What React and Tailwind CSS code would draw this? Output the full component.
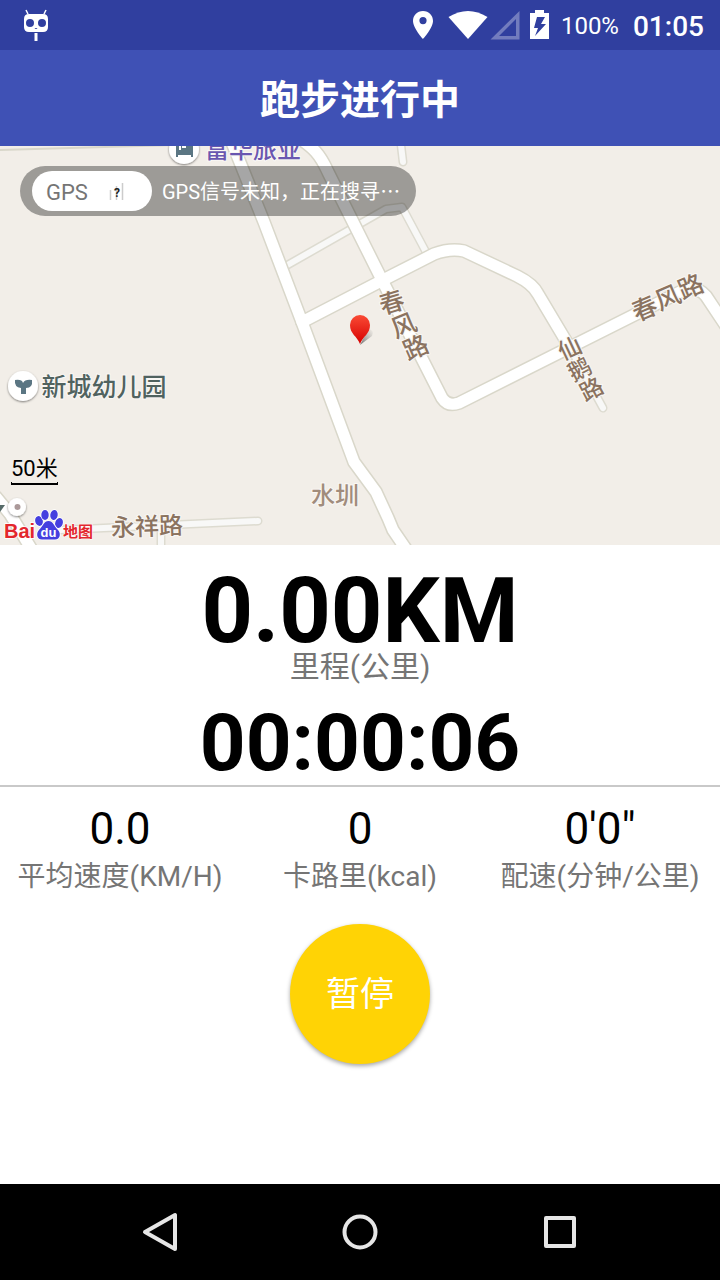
import React from "react";

const mainRoads = [
  "M229 135L264 222L302 322L354 462L376 492L388 518L393 530L408 552",
  "M296 136C314 148 320 154 328 172L383 282L442 398Q448 407 459 403L680 292Q696 284 706 296L726 326",
  "M302 322L383 280L434 254Q450 248 464 251L517 276Q533 284 538 294L569 346",
  "M-4 497L10 514L32 550",
];
const smallRoads = [
  "M284 267L386 209L402 207L426 252",
  "M398 120L403 162",
  "M569 346L603 408",
  "M60 530L258 521",
  "M161 528L161 550",
];

function RoadName({ children, x, y, angle, size = 25, fill = "#8b7360" }) {
  return (
    <text
      x={x}
      y={y}
      fontSize={size}
      fill={fill}
      stroke="#f9f7f4"
      strokeWidth="2"
      paintOrder="stroke"
      textAnchor="middle"
      dominantBaseline="central"
      transform={angle ? `rotate(${angle} ${x} ${y})` : undefined}
      className="font-medium"
    >
      {children}
    </text>
  );
}

function MapDrawing() {
  return (
    <svg
      viewBox="0 146 720 399"
      preserveAspectRatio="xMidYMid slice"
      className="block h-full w-full"
      role="img"
      aria-label="地图"
    >
      <defs>
        <linearGradient id="pin" x1="0" y1="0" x2="0" y2="1">
          <stop offset="0" stopColor="#fa4b35" />
          <stop offset="1" stopColor="#d60000" />
        </linearGradient>
        <linearGradient id="shade" x1="0" y1="1" x2="1" y2="0">
          <stop offset="0" stopColor="#444" stopOpacity=".75" />
          <stop offset="1" stopColor="#777" stopOpacity="0" />
        </linearGradient>
        <filter id="drop" x="-30%" y="-30%" width="160%" height="160%">
          <feDropShadow dx="0" dy="1" stdDeviation="1" floodOpacity=".5" />
        </filter>
      </defs>
      <rect y="146" width="720" height="399" fill="#f2eee8" />
      <path d="M0 150L175 145" stroke="#d9d7ca" strokeWidth="2" />
      <g fill="none" strokeLinejoin="round" strokeLinecap="round">
        {smallRoads.map((d) => <path key={d} d={d} stroke="#dddbd0" strokeWidth="9" />)}
        {smallRoads.map((d) => <path key={d} d={d} stroke="#f8f8f7" strokeWidth="6" />)}
        {mainRoads.map((d) => <path key={d} d={d} stroke="#d9d7ca" strokeWidth="14" />)}
        {mainRoads.map((d) => <path key={d} d={d} stroke="#fff" strokeWidth="11" />)}
      </g>

      <RoadName x={392} y={303} angle={-17}>春</RoadName>
      <RoadName x={404} y={326} angle={-22}>风</RoadName>
      <RoadName x={416} y={348} angle={-24}>路</RoadName>
      <RoadName x={645} y={309} angle={-23}>春</RoadName>
      <RoadName x={668} y={298} angle={-23}>风</RoadName>
      <RoadName x={691} y={287} angle={-23}>路</RoadName>
      <RoadName x={570} y={349} angle={-25} size={23}>仙</RoadName>
      <RoadName x={580} y={370} angle={-28} size={23}>鹅</RoadName>
      <RoadName x={592} y={390} angle={-28} size={23}>路</RoadName>
      <RoadName x={147} y={527} angle={-2} size={24}>永祥路</RoadName>
      <RoadName x={335} y={496} size={24} fill="#a18c7c">水圳</RoadName>
      <RoadName x={253} y={150} size={24} fill="#6a57b0">富华旅业</RoadName>
      <RoadName x={104} y={387} size={25} fill="#50625f">新城幼儿园</RoadName>

      <circle cx="184" cy="149" r="15" fill="#fff" filter="url(#drop)" />
      <path fillRule="evenodd" d="M176 141H179V150H181V141H190Q193 142 193 147V157H191V155H178V157H176ZM182 146V148H186V146Z" fill="#5b7683" />
      <circle cx="23" cy="386" r="15" fill="#fff" filter="url(#drop)" />
      <path d="M15 380Q22 379 23 383Q25 379 32 380Q33 388 26 388V394H21V388Q14 387 15 380Z" fill="#5b7683" />
      <path d="M0 505H5L0 512Z" fill="#566b69" />
      <circle cx="17" cy="507" r="9" fill="#fff" filter="url(#drop)" />
      <circle cx="17.500" cy="507" r="3" fill="#ab9999" />

      <path d="M360 345L368 329Q375 330 372 336Z" fill="url(#shade)" />
      <path d="M360 344C357 336 350 334 350 325A10 10 0 0 1 370 325C370 334 363 336 360 344Z" fill="url(#pin)" />

      <g stroke="#fff" strokeWidth="1.500" paintOrder="stroke">
        <text x="4" y="538" fontSize="20" className="font-['Liberation_Sans',sans-serif] font-bold" fill="#e3272d">Bai</text>
        <g fill="#453fdf">
          <ellipse cx="39" cy="521" rx="3.800" ry="5" transform="rotate(-15 39 521)" />
          <ellipse cx="45" cy="515" rx="3.700" ry="5" />
          <ellipse cx="54" cy="515" rx="3.700" ry="5" transform="rotate(10 54 515)" />
          <ellipse cx="59" cy="523" rx="3.800" ry="5" transform="rotate(20 59 523)" />
          <path d="M48.500 521C53 521 54 526 58 530C61 533 60.500 539.500 55 539.500H42C36.500 539.500 36 533 39 530C43 526 44 521 48.500 521Z" />
        </g>
      </g>
      <text x="48.500" y="537" fontSize="13" textAnchor="middle" fill="#fff" className="font-['Liberation_Sans',sans-serif] font-bold">du</text>
      <text x="63" y="537" fontSize="15" fill="#e3272d" stroke="#fff" strokeWidth="1" paintOrder="stroke" className="font-bold">地图</text>
    </svg>
  );
}

function StatusBar() {
  return (
    <div className="flex h-[50px] items-center bg-[#303f9f] px-4 text-white">
      <svg width="40" height="50" viewBox="16 0 40 50" aria-hidden="true">
        <path d="M26 10L28 14M46 10L44 14" stroke="#fff" strokeWidth="1.500" />
        <path fillRule="evenodd" fill="#fff" d="M29 14H43Q48 14 48 19V27Q48 32 43 32H29Q24 32 24 27V19Q24 14 29 14ZM30 19A4 4 0 1 0 30 27A4 4 0 1 0 30 19ZM42 19A4 4 0 1 0 42 27A4 4 0 1 0 42 19ZM34.500 28Q36 30 37.500 28Z" />
        <path d="M34.500 33H37.500V41H34.500Z" fill="#fff" />
      </svg>
      <svg className="ml-auto" width="140" height="50" viewBox="412 0 140 50" fill="#fff" aria-hidden="true">
        <path fillRule="evenodd" d="M424 11C418 11 414 15.500 414 21C414 28 424 39 424 39S434 28 434 21C434 15.500 430 11 424 11ZM424 17A3.600 3.600 0 1 1 424 24.200A3.600 3.600 0 1 1 424 17Z" />
        <path d="M449.500 17Q469 5 488.500 17L469 39Z" />
        <path fillRule="evenodd" d="M491.500 39.500L520.500 11V39.500ZM500 36H517V19Z" opacity=".32" />
        <path fillRule="evenodd" d="M531 13H536V10H545V13H550V39H531ZM538 17L535 28H539L536 36L547 24H542L546 17Z" />
      </svg>
      <span className="ml-2.5 pt-0.5 text-2xl">100%</span>
      <span className="ml-3.5 pt-1 text-[28px] font-medium">01:05</span>
    </div>
  );
}

function Stat({ value, label }) {
  return (
    <div className="flex flex-col items-center gap-2">
      <dd className="order-1 text-[44px] leading-[48px] text-black">{value}</dd>
      <dt className="order-2 text-[28px] leading-8 whitespace-nowrap text-[#757575]">{label}</dt>
    </div>
  );
}

function NavButton({ label, children }) {
  return (
    <button type="button" aria-label={label} className="flex h-full items-center justify-center">
      <svg width="40" height="40" viewBox="0 0 40 40" fill="none" stroke="#e6e6e6" strokeWidth="4" strokeLinejoin="round">
        {children}
      </svg>
    </button>
  );
}

export default function App() {
  return (
    <div className="flex min-h-screen flex-col bg-white font-['Roboto','Noto_Sans_CJK_SC',sans-serif]" lang="zh-CN">
      <StatusBar />
      <header className="flex h-24 items-center justify-center bg-[#3f51b5] pt-1.5">
        <h1 className="text-[40px] font-bold text-white">跑步进行中</h1>
      </header>

      <section className="relative h-[399px] overflow-hidden">
        <MapDrawing />
        <div className="absolute top-5 left-5 flex h-[50px] items-center rounded-full bg-[#000]/35 pr-4 pl-3 text-white">
          <div className="flex h-10 w-[120px] items-center gap-5 rounded-full bg-white pt-0.5 pl-3.5 text-[#757575]">
            <span className="text-[22px]">GPS</span>
            <svg width="18" height="20" viewBox="0 0 18 20" aria-hidden="true">
              <path d="M2.500 8V18M8.500 4V18M14.500 1V18" stroke="#ccc" strokeWidth="1.500" />
              <text x="9" y="15" fontSize="12" textAnchor="middle" fill="#222" className="font-bold">?</text>
            </svg>
          </div>
          <span className="ml-2.5 text-xl leading-6 whitespace-nowrap">
            GPS信号未知，正在搜寻<span className="font-['Noto_Sans_CJK_SC',sans-serif]">…</span>
          </span>
        </div>
        <div className="absolute bottom-[60px] left-[11px] text-[22px] leading-[22px] text-black">
          <span className="block">50米</span>
          <div className="mt-0.5 h-[3px] border-x border-b-2 border-black" />
        </div>
      </section>

      <main className="flex flex-col items-center pt-[22px]">
        <p className="text-[90px] leading-[90px] font-bold text-black">0.00KM</p>
        <p className="text-[30px] leading-5 text-[#757575]">里程(公里)</p>
        <p className="mt-[26px] text-[80px] leading-[80px] font-bold text-black">00:00:06</p>
        <dl className="mt-0.5 grid w-full grid-cols-3 border-t-2 border-[#c9c9c9] pt-[18px]">
          <Stat value="0.0" label="平均速度(KM/H)" />
          <Stat value="0" label="卡路里(kcal)" />
          <Stat value={"0'0\""} label="配速(分钟/公里)" />
        </dl>
        <button type="button" className="mt-[31px] size-[140px] rounded-full bg-[#ffd305] text-[34px] text-white shadow-[0_2px_4px_rgba(0,0,0,0.35)]">
          暂停
        </button>
      </main>

      <nav className="mt-auto grid h-24 grid-cols-3 bg-black px-[60px]">
        <NavButton label="返回"><path d="M5 20L35 3V37Z" /></NavButton>
        <NavButton label="主页"><circle cx="20" cy="20" r="15.500" /></NavButton>
        <NavButton label="最近任务"><rect x="6" y="6" width="28" height="28" /></NavButton>
      </nav>
    </div>
  );
}
